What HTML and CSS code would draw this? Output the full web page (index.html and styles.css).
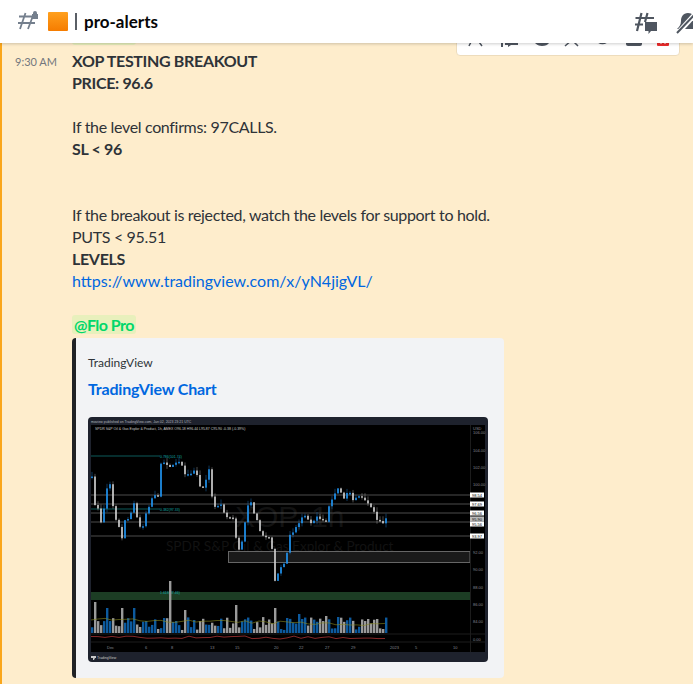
FILE: index.html
```html
<!DOCTYPE html>
<html lang="en">
<head>
  <meta charset="UTF-8">
  <meta name="viewport" content="width=device-width, initial-scale=1.0">
  <title>pro-alerts</title>
  <link rel="stylesheet" href="styles.css">
</head>
<body>

  <header class="topbar">
    <svg class="channel-icon" width="24" height="24" viewBox="0 0 24 24">
      <path d="M4 19 L9.500 3 M12 19 L16.500 7 M3 6.500 H16 M2 13 H19" fill="none" stroke="#747f8d" stroke-width="1.800"/>
      <path d="M17 4 V3 a2 2 0 0 1 4 0 V4 h1 v5 h-6 V4 z" fill="#747f8d"/>
    </svg>
    <span class="emoji-square"></span>
    <span class="divider"></span>
    <span class="channel-name">pro-alerts</span>
    <div class="topbar-actions">
      <svg width="24" height="24" viewBox="0 0 24 24">
        <path d="M3 21 L7.500 3 M11 12 L13.500 3 M1.500 8 H20 M1 14.500 H9" fill="none" stroke="#4f5660" stroke-width="2.200"/>
        <path d="M11 12 H23 V21 H17 L14.500 24 V21 H11 z" fill="#4f5660"/>
      </svg>
      <svg width="24" height="24" viewBox="0 0 24 24">
        <path d="M12 3 C7 3 5 7 5 11 C5 15 3 17 1 19 H23 C20 17 19 15 19 11 C19 7 17 3 12 3 z" fill="#4f5660"/>
        <path d="M1 24 L22 1" stroke="#fff" stroke-width="5"/>
        <path d="M1 23 L21 2" stroke="#4f5660" stroke-width="2"/>
      </svg>
    </div>
  </header>

  <main class="chat">
    <div class="prev-mention"></div>

    <div class="msg-toolbar">
      <svg width="20" height="20" viewBox="0 0 20 20"><path d="M4 19 L6 15 M14 15 L17 19" fill="none" stroke="#4f5660" stroke-width="1.500"/></svg>
      <svg width="24" height="20" viewBox="0 0 24 20"><path d="M2 15 H8 M6 13 V20" stroke="#4f5660" stroke-width="2"/><path d="M9 12 H22 V18 H15 L12 20 V18 H9 z" fill="#4f5660"/></svg>
      <svg width="20" height="20" viewBox="0 0 20 20"><path d="M2 12 H18 V16 Q16 19 11 19 Q5 19 2 13 z" fill="#4f5660"/></svg>
      <svg width="20" height="20" viewBox="0 0 20 20"><path d="M3 19 L10 13 L16 19 M10 16 V13" fill="none" stroke="#4f5660" stroke-width="1.500"/></svg>
      <svg width="20" height="20" viewBox="0 0 20 20"><path d="M4 13 A6 6 0 0 0 15 13" fill="none" stroke="#4f5660" stroke-width="1.500"/></svg>
      <svg width="20" height="20" viewBox="0 0 20 20"><path d="M2 12 H18 V17 Q18 19 16 19 H4 Q2 19 2 17 z" fill="#4f5660"/></svg>
      <svg width="16" height="20" viewBox="0 0 16 20"><rect x="2" y="12" width="12" height="7" rx="1" fill="#ed2c2c"/><path d="M6 13 V17 M10 13 V17" stroke="#fff" stroke-width="1"/></svg>
    </div>

    <article class="message">
      <time class="timestamp">9:30 AM</time>
      <div class="content">
        <p><strong>XOP TESTING BREAKOUT</strong></p>
        <p><strong>PRICE: 96.6</strong></p>
        <p>&nbsp;</p>
        <p>If the level confirms: 97CALLS.</p>
        <p><strong>SL &lt; 96</strong></p>
        <p>&nbsp;</p>
        <p>&nbsp;</p>
        <p>If the breakout is rejected, watch the levels for support to hold.</p>
        <p>PUTS &lt; 95.51</p>
        <p><strong>LEVELS</strong></p>
        <p><a href="#">https://www.tradingview.com/x/yN4jigVL/</a></p>
        <p>&nbsp;</p>
        <p><span class="mention">@Flo Pro</span></p>

        <div class="embed">
          <div class="embed-provider">TradingView</div>
          <a class="embed-title" href="#">TradingView Chart</a>
          <div class="embed-image">
            <svg id="chart" width="400" height="245" viewBox="0 0 400 245">
              <rect width="400" height="245" fill="#1e222d"/>
              <rect x="3" y="8" width="394" height="227" fill="#000"/>
              <text class="tiny" x="3" y="5.500" fill="#b2b5be">moview published on TradingView.com, Jan 02, 2023 23:21 UTC</text>
              <text class="tiny" x="7" y="13" fill="#c8c8c8">SPDR S&amp;P Oil &amp; Gas Explor &amp; Product, 1h, AMEX  O96.18  H96.44  L95.87  C95.90  -0.38 (-0.39%)</text>
              <text class="mark" x="147" y="110">XOP, 1h</text>
              <text class="mark-sub" x="78" y="134">SPDR S&amp;P Oil &amp; Gas Explor &amp; Product</text>
              <g id="levels"></g>
              <g id="candles"></g>
              <g id="volume"></g>
              <g id="axis"></g>
              <text class="tiny" x="9" y="242" fill="#c8c8c8">TradingView</text>
              <path d="M3 239 H8 V241 H7 L6 243 H5 L5 241 H3 z" fill="#c8c8c8"/>
            </svg>
          </div>
        </div>
      </div>
    </article>
  </main>

  <script src="chart.js"></script>
</body>
</html>
```

FILE: styles.css
```css
* {
  box-sizing: border-box;
}

html, body {
  height: 100%;
}

body {
  margin: 0;
  overflow: hidden;
  background: #fff;
  font-family: Lato, 'Noto Sans', sans-serif;
  font-size: 16px;
  color: #2e3338;
}

.topbar {
  position: relative;
  z-index: 2;
  display: flex;
  align-items: center;
  height: 43px;
  padding-left: 16px;
  background: #fff;
  box-shadow: 0 1px 3px rgba(0,0,0,0.2);
}

.channel-icon {
  flex: none;
  margin-right: 8px;
}

.emoji-square {
  flex: none;
  width: 20px;
  height: 19px;
  border-radius: 1px;
  background: linear-gradient(#ffa01e, #f57c00);
}

.divider {
  flex: none;
  width: 2px;
  height: 17px;
  margin: 0 7px;
  background: #5a5f66;
}

.channel-name {
  font-size: 17px;
  font-weight: 700;
  color: #060607;
}

.topbar-actions {
  display: flex;
  gap: 18px;
  margin-left: auto;
  margin-right: -7px;
}

.chat {
  position: relative;
  height: 641px;
  overflow: hidden;
  background: #feedcc;
  border-left: 2px solid #faa61a;
}

.prev-mention {
  position: absolute;
  top: -12px;
  left: 70px;
  width: 64px;
  height: 14px;
  border-radius: 3px;
  background: #e8f0bc;
}

.msg-toolbar {
  position: absolute;
  top: -8px;
  left: 454px;
  display: flex;
  align-items: flex-end;
  justify-content: space-between;
  width: 224px;
  height: 21px;
  padding: 0 8px 8px;
  overflow: hidden;
  background: #fff;
  border: 1px solid #eddcbc;
  border-radius: 4px;
}

.msg-toolbar svg {
  flex: none;
  margin-top: -20px;
}

.message {
  display: flex;
  padding-top: 7px;
}

.timestamp {
  flex: none;
  width: 70px;
  padding: 4px 0 0 13px;
  font-size: 11px;
  line-height: 16px;
  color: #72767d;
}

.content {
  flex: 1;
  line-height: 22px;
  letter-spacing: -0.33px;
}

.content p {
  margin: 0;
}

.content strong {
  font-weight: 700;
}

.content a {
  color: #0067e0;
  text-decoration: none;
  letter-spacing: 0;
}

.mention {
  padding: 0 2px;
  border-radius: 3px;
  background: #e8f0bc;
  color: #00d76a;
  font-weight: 700;
  letter-spacing: -0.55px;
}

.embed {
  width: 432px;
  height: 340px;
  margin-top: 2px;
  padding: 17px 16px 16px 12px;
  background: #f2f3f5;
  border-left: 4px solid #202225;
  border-radius: 4px;
  letter-spacing: 0;
}

.embed-provider {
  font-size: 12px;
  line-height: 16px;
}

.embed .embed-title {
  display: block;
  margin-top: 7px;
  font-weight: 700;
  line-height: 22px;
  letter-spacing: -0.18px;
}

.embed-image {
  width: 400px;
  height: 245px;
  margin-top: 17px;
  overflow: hidden;
  border-radius: 4px;
}

.embed-image svg {
  display: block;
}

.tiny {
  font-family: 'Liberation Sans', sans-serif;
  font-size: 3.500px;
}

.axis-label {
  font-family: 'Liberation Sans', sans-serif;
  font-size: 4px;
  fill: #858891;
}

.mark {
  font-family: 'Liberation Sans', sans-serif;
  font-size: 30px;
  fill: #121212;
}

.mark-sub {
  font-family: Lato, sans-serif;
  font-size: 13.600px;
  fill: #121212;
}
```

FILE: chart.js
```js
// draws the chart picture inside the embed, coordinates are svg pixels
const NS = 'http://www.w3.org/2000/svg';

function el(parent, name, attrs, text) {
  const node = document.createElementNS(NS, name);
  for (const key in attrs) node.setAttribute(key, attrs[key]);
  if (text) node.textContent = text;
  document.getElementById(parent).appendChild(node);
}

function line(parent, x1, y1, x2, y2, color, width) {
  el(parent, 'line', { x1, y1, x2, y2, stroke: color, 'stroke-width': width || 1 });
}

// simple repeatable noise
let seed = 7;
function rnd() {
  seed = (seed * 16807) % 2147483647;
  return seed / 2147483647;
}

// levels
[78, 87, 96, 105, 119].forEach(y => line('levels', 3, y, 382, y, '#4d4d4d'));
line('levels', 3, 39, 72, 39, '#0c5a5a');
line('levels', 3, 92, 72, 92, '#0c5a5a');
el('levels', 'rect', { x: 140.500, y: 134.500, width: 241.500, height: 11, fill: '#1a1a1a', stroke: '#666' });
el('levels', 'rect', { x: 3, y: 175, width: 379, height: 8, fill: '#1c3d24' });
el('levels', 'text', { class: 'tiny', x: 72, y: 41, fill: '#1aa' }, '0.786(101.74)');
el('levels', 'text', { class: 'tiny', x: 72, y: 94, fill: '#1aa' }, '0.382(97.33)');
el('levels', 'text', { class: 'tiny', x: 72, y: 177, fill: '#1aa' }, '1.618(87.46)');
line('levels', 382.500, 8, 382.500, 235, '#1c1c1c');
line('levels', 3, 225, 397, 225, '#1c1c1c');
line('levels', 3, 217, 397, 217, '#1c1c1c');

// price path, [x, y] points the candles follow
const path = [
  [3,61],[5,88],[8,86],[12,105],[15,91],[19,65],[22,70],[25,98],[30,111],[32,126],
  [37,96],[40,105],[45,85],[50,111],[54,108],[57,96],[65,76],[69,81],[70,63],[71,45],
  [77,46],[82,50],[89,45],[94,48],[97,60],[107,53],[112,75],[120,53],[122,75],[125,91],
  [132,86],[137,100],[144,101],[147,120],[149,136],[152,130],[160,81],[167,101],[170,111],[175,120],
  [182,121],[184,140],[186,165],[192,150],[197,145],[200,118],[205,113],[209,108],[215,96],[222,105],
  [229,100],[237,105],[239,91],[247,75],[250,70],[255,81],[260,75],[264,83],[269,78],[277,85],
  [284,91],[289,105],[294,105],[299,100]
];

function priceAt(x) {
  for (let i = 1; i < path.length; i++) {
    if (x <= path[i][0]) {
      const a = path[i - 1], b = path[i];
      return a[1] + (b[1] - a[1]) * (x - a[0]) / (b[0] - a[0]);
    }
  }
  return path[path.length - 1][1];
}

// candles and volume together, one bar every 3 px
const spikes = { 6: 31, 18: 25, 33: 25, 45: 25, 81: 52, 96: 23, 147: 28, 186: 25, 210: 19, 237: 17, 249: 16, 279: 14, 288: 14 };
const volBase = 216;
let prev = priceAt(3);

for (let x = 3; x < 300; x += 3) {
  const close = priceAt(x) + (rnd() - 0.5) * 3;
  const up = close < prev;
  const top = Math.min(prev, close);
  const height = Math.max(Math.abs(close - prev), 1.500);
  const wick = rnd() * 5;
  line('candles', x + 1, top - wick, x + 1, top + height + wick * rnd(), up ? '#1f6fb5' : '#999', 0.500);
  el('candles', 'rect', { x: x + 0.200, y: top, width: 1.600, height, fill: up ? '#2196f3' : '#d0d0d0' });

  const vol = spikes[x] || 3 + rnd() * 13;
  el('volume', 'rect', { x, y: volBase - vol, width: 2.400, height: vol, fill: up ? '#0d5a9e' : '#9a9a9a' });
  prev = close;
}

// volume average and oscillator
let avg = 'M3 203', osc = 'M3 219.500';
for (let x = 10; x < 300; x += 7) {
  avg += ' L' + x + ' ' + (201 + x / 60 + rnd() * 3).toFixed(1);
  osc += ' L' + x + ' ' + (219 + rnd() * 3).toFixed(1);
}
el('volume', 'path', { d: avg, fill: 'none', stroke: '#8a8a20', 'stroke-width': 0.600 });
el('volume', 'path', { d: osc, fill: 'none', stroke: '#a33', 'stroke-width': 0.800 });

// right axis
[[11,'USD'],[15,'106.00'],[33,'104.00'],[50,'102.00'],[67,'100.00'],[135,'92.00'],[152,'90.00'],[170,'88.00'],[187,'86.00'],[204,'84.00'],[222,'0.00']]
  .forEach(a => el('axis', 'text', { class: 'axis-label', x: 385, y: a[0] + 1.500 }, a[1]));

[[78,'98.54','#fff'],[87,'97.69','#fff'],[96,'96.56','#fff'],[102,'95.90','#bbb'],[107,'95.56','#fff'],[119,'93.97','#fff']]
  .forEach(a => {
    el('axis', 'rect', { x: 382, y: a[0] - 2.500, width: 14, height: 5, fill: a[2] });
    el('axis', 'text', { class: 'axis-label', x: 384, y: a[0] + 1.500, style: 'fill:#000' }, a[1]);
  });

// date axis
[[19,'Dec'],[57,'6'],[83,'8'],[122,'13'],[147,'15'],[186,'20'],[211,'22'],[237,'27'],[263,'29'],[302,'2023'],[327,'5'],[365,'10']]
  .forEach(a => el('axis', 'text', { class: 'axis-label', x: a[0], y: 232 }, a[1]));
```
